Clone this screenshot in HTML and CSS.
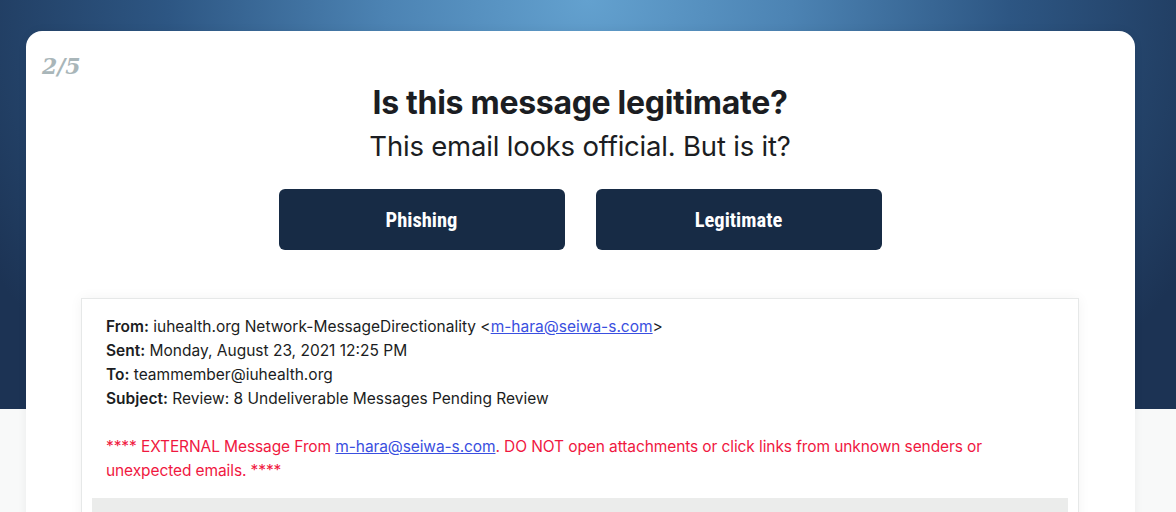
FILE: index.html
```html
<!DOCTYPE html>
<html>
<head>
<meta charset="UTF-8">
<title>Phishing quiz</title>
<link rel="stylesheet" href="styles.css">
</head>
<body>

<div class="card">
	<div class="step">2/5</div>

	<h1 class="question">Is this message legitimate?</h1>
	<p class="hint">This email looks official. But is it?</p>

	<div class="answers">
		<button type="button" class="btn">Phishing</button>
		<button type="button" class="btn">Legitimate</button>
	</div>

	<div class="mail">
		<div class="head">
			<b>From:</b> iuhealth.org Network-MessageDirectionality &lt;<a href="#">m-hara@seiwa-s.com</a>&gt;<br>
			<b>Sent:</b> Monday, August 23, 2021 12:25 PM<br>
			<b>To:</b> teammember@iuhealth.org<br>
			<b>Subject:</b> Review: 8 Undeliverable Messages Pending Review
		</div>
		<p class="warn">**** EXTERNAL Message From <a href="#">m-hara@seiwa-s.com</a>. DO NOT open attachments or click links from unknown senders or unexpected emails. ****</p>
		<div class="body"></div>
	</div>
</div>

</body>
</html>
```

FILE: styles.css
```css
html, body {margin: 0; height: 100%; overflow: hidden;}

body {
	background-color: #f8f9f9;
	background-image: radial-gradient(ellipse 680px 560px at 50% 0, #63a1cf 0%, #4c83b3 30%, #2d5683 62%, #1c3354 100%);
	background-size: 100% 409px;
	background-repeat: no-repeat;
	font-family: Inter, "Noto Sans", sans-serif;
	color: #1b1d22;
}

.card {
	margin: 31px 0 0 26px;
	width: 1109px;
	height: 600px;
	background: #fff;
	border-radius: 16px 16px 0 0;
	box-shadow: 0 0 10px rgba(0, 0, 0, 0.06);
	box-sizing: border-box;
	padding: 22px 56px 0 55px;
}

.step {
	margin-left: -39px;
	font-family: "DejaVu Serif", "Liberation Serif", serif;
	font-style: italic;
	font-weight: bold;
	font-size: 22px;
	line-height: 26px;
	color: #a9b6b9;
}

.question {margin: 4px 0 0; text-align: center; font-size: 32px; line-height: 40px; font-weight: 700; letter-spacing: -0.3px;}
.hint {margin: 4px 0 0; text-align: center; font-size: 27.5px; line-height: 38px; font-weight: 400; letter-spacing: -0.2px;}

.answers {display: flex; justify-content: center; gap: 31px; margin-top: 24px;}

.btn {
	width: 286px;
	height: 61px;
	border: none;
	border-radius: 6px;
	background: #172b45;
	color: #fff;
	font-family: "Roboto Condensed", "DejaVu Sans Condensed", Roboto, sans-serif;
	font-stretch: condensed;
	font-weight: bold;
	font-size: 20.5px;
}

.mail {
	margin-top: 48px;
	border: 1px solid #e6e8e8;
	box-shadow: 0 0 12px rgba(0, 0, 0, 0.05);
	padding: 16px 10px 0;
	font-size: 15.5px;
	line-height: 24px;
}

.mail .head {padding: 0 14px;}
.mail b {font-weight: 600;}
.mail a {color: #3a4fe0;}

.warn {margin: 24px 0 0; padding: 0 14px; color: #f0183f; letter-spacing: -0.1px;}

.body {margin-top: 15px; height: 80px; background: #ebeceb;}
```
